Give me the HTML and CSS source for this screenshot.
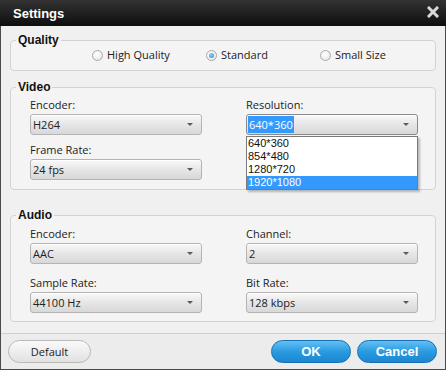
FILE: index.html
```html
<!DOCTYPE html>
<html lang="en">
<head>
    <meta charset="UTF-8">
    <title>Settings</title>
    <link rel="stylesheet" href="styles.css">
</head>
<body>
    <div class="window">
        <div class="titlebar">
            <span class="title">Settings</span>
            <svg class="close" width="12" height="12" viewBox="0 0 12 12"><path d="M2 2 L10 10 M10 2 L2 10" stroke="#d9d9d9" stroke-width="3" stroke-linecap="square"/></svg>
        </div>

        <div class="content">
            <fieldset class="group quality">
                <legend>Quality</legend>
                <div class="radios">
                    <label class="radio"><span class="dot"></span>High Quality</label>
                    <label class="radio"><span class="dot checked"></span>Standard</label>
                    <label class="radio"><span class="dot"></span>Small Size</label>
                </div>
            </fieldset>

            <fieldset class="group video">
                <legend>Video</legend>
                <div class="fields">
                    <div class="field">
                        <div class="label">Encoder:</div>
                        <div class="select">H264</div>
                    </div>
                    <div class="field">
                        <div class="label">Resolution:</div>
                        <div class="select-wrap">
                            <div class="select focused"><span class="sel-text">640*360</span></div>
                            <ul class="dropdown">
                                <li>640*360</li>
                                <li>854*480</li>
                                <li>1280*720</li>
                                <li class="active">1920*1080</li>
                            </ul>
                        </div>
                    </div>
                    <div class="field">
                        <div class="label">Frame Rate:</div>
                        <div class="select">24 fps</div>
                    </div>
                    <div class="field"></div>
                </div>
            </fieldset>

            <fieldset class="group audio">
                <legend>Audio</legend>
                <div class="fields">
                    <div class="field">
                        <div class="label">Encoder:</div>
                        <div class="select">AAC</div>
                    </div>
                    <div class="field">
                        <div class="label">Channel:</div>
                        <div class="select">2</div>
                    </div>
                    <div class="field">
                        <div class="label">Sample Rate:</div>
                        <div class="select">44100 Hz</div>
                    </div>
                    <div class="field">
                        <div class="label">Bit Rate:</div>
                        <div class="select">128 kbps</div>
                    </div>
                </div>
            </fieldset>
        </div>

        <div class="footer">
            <button class="btn btn-grey">Default</button>
            <div class="right-buttons">
                <button class="btn btn-blue">OK</button>
                <button class="btn btn-blue">Cancel</button>
            </div>
        </div>
    </div>
</body>
</html>
```

FILE: styles.css
```css
body {
    margin: 0;
    font-family: 'Open Sans', 'Noto Sans', sans-serif;
    font-size: 11px;
    color: #222222;
    background-color: #ffffff;
}
.window {
    width: 446px;
    height: 370px;
    box-sizing: border-box;
    border: 1px solid #4a4a4a;
    border-top: none;
    background-color: #f0f0f0;
    display: flex;
    flex-direction: column;
}
.titlebar {
    height: 26px;
    margin: 0 -1px;
    background: linear-gradient(#333333, #0e0e0e);
    display: flex;
    align-items: center;
    justify-content: space-between;
    padding: 0 7px 0 13px;
}
.title {
    font-family: 'Liberation Sans', sans-serif;
    font-weight: 700;
    font-size: 13px;
    color: #ffffff;
}
.close {
    margin-top: -2px;
}
.content {
    padding: 7px 9px 0 9px;
    flex: 1;
}
.group {
    margin: 0;
    padding: 0 0 0 19px;
    border: 1px solid #d3d3d3;
    border-radius: 4px;
    background-color: #f4f4f4;
}
.group legend {
    margin-left: -14px;
    padding: 0 2px;
    font-family: 'Liberation Sans', sans-serif;
    font-weight: 700;
    font-size: 12px;
    line-height: 14px;
    color: #111111;
}
.radios {
    display: flex;
    padding: 1px 0 8px 62px;
}
.radio {
    width: 114px;
    display: flex;
    align-items: center;
    gap: 4px;
    line-height: 14px;
}
.dot {
    width: 11px;
    height: 11px;
    border: 1px solid #a9a9a9;
    border-radius: 50%;
    background: radial-gradient(circle at 40% 35%, #ffffff, #e2e2e2);
    box-sizing: border-box;
    position: relative;
}
.dot.checked::after {
    content: "";
    position: absolute;
    left: 2px;
    top: 2px;
    width: 5px;
    height: 5px;
    border-radius: 50%;
    background: radial-gradient(circle at 40% 35%, #8fd0ff, #2a86d6);
}
.video {
    margin-top: 9px;
    padding-bottom: 9px;
}
.audio {
    margin-top: 18px;
    padding-bottom: 8px;
}
.fields {
    display: grid;
    grid-template-columns: 172px 172px;
    column-gap: 44px;
    row-gap: 8px;
    padding-top: 4px;
}
.audio .fields {
    row-gap: 12px;
    padding-top: 5px;
}
.label {
    line-height: 14px;
    margin-bottom: 2px;
}
.select {
    height: 21px;
    box-sizing: border-box;
    border: 1px solid #b4b4b4;
    border-radius: 3px;
    background: linear-gradient(#f9f9f9, #e6e6e6 50%, #d8d8d8);
    padding-left: 2px;
    line-height: 19px;
    position: relative;
    box-shadow: inset 0 1px 0 #ffffff;
}
.select::after {
    content: "";
    position: absolute;
    right: 8px;
    top: 8px;
    border-left: 3px solid transparent;
    border-right: 3px solid transparent;
    border-top: 3px solid #5a5a5a;
}
.select-wrap {
    position: relative;
}
.select.focused {
    border-color: #8a8a8a;
    padding-left: 1px;
}
.sel-text {
    background-color: #3399ff;
    color: #ffffff;
    padding: 1px 1px;
}
.dropdown {
    position: absolute;
    left: 0;
    top: 22px;
    width: 172px;
    box-sizing: border-box;
    margin: 0;
    padding: 0;
    list-style: none;
    background-color: #ffffff;
    border: 1px solid #7a7a7a;
    box-shadow: 2px 2px 2px rgba(0, 0, 0, 0.25);
    font-family: 'Liberation Sans', sans-serif;
    font-size: 11px;
    color: #111111;
    z-index: 2;
}
.dropdown li {
    height: 13px;
    line-height: 13px;
    padding-left: 1px;
}
.dropdown li.active {
    background-color: #3399ff;
    color: #ffffff;
}
.footer {
    height: 35px;
    border-top: 1px solid #cfcfcf;
    background-color: #ececec;
    display: flex;
    align-items: center;
    justify-content: space-between;
    padding: 0 8px 0 7px;
}
.right-buttons {
    display: flex;
    gap: 6px;
}
.btn {
    height: 23px;
    border-radius: 12px;
    font-family: 'Open Sans', sans-serif;
    font-size: 11px;
    cursor: pointer;
}
.btn-grey {
    width: 83px;
    border: 1px solid #b9b9b9;
    background: linear-gradient(#fafafa, #e1e1e1);
    color: #222222;
}
.btn-blue {
    width: 80px;
    border: 1px solid #166fb3;
    background: linear-gradient(#63c0f4, #2a9be2 50%, #1b86d2);
    color: #ffffff;
    font-family: 'Liberation Sans', sans-serif;
    font-weight: 700;
    font-size: 13px;
}
```
